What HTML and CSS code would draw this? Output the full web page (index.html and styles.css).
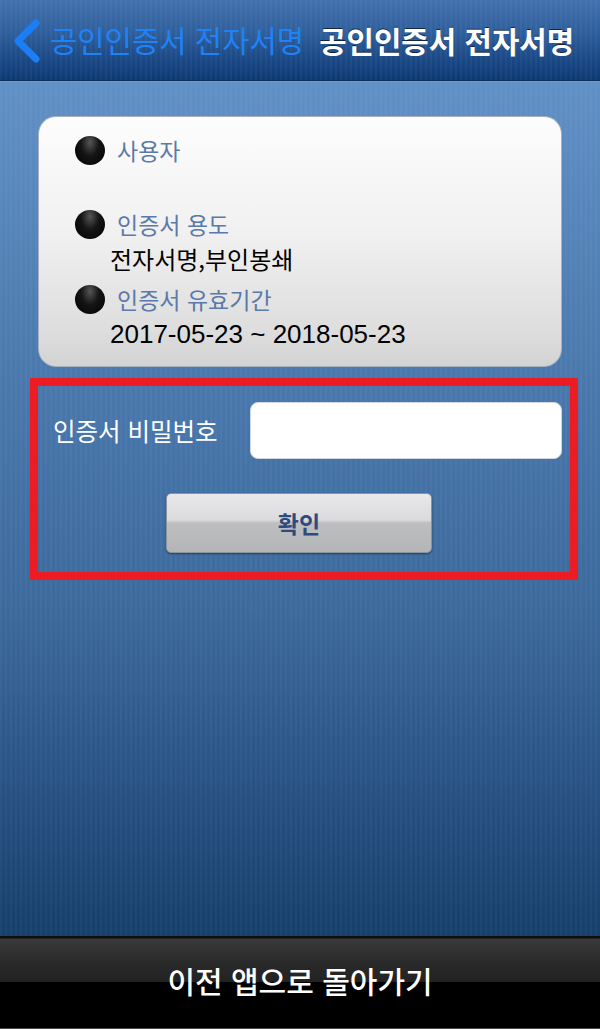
FILE: index.html
```html
<!DOCTYPE html>
<html lang="ko">
<head>
<meta charset="utf-8">
<title>공인인증서 전자서명</title>
<link rel="stylesheet" href="styles.css">
</head>
<body>
<div class="screen">
  <header class="nav">
    <svg class="chev" width="30" height="44" viewBox="0 0 30 44"><polyline points="24,4 6,22 24,40" fill="none" stroke="#1b7ef4" stroke-width="7" stroke-linecap="round" stroke-linejoin="round"/></svg>
    <span class="back-title">공인인증서 전자서명</span>
    <span class="title">공인인증서 전자서명</span>
  </header>
  <main class="content">
    <section class="card">
      <div class="row r1"><span class="dot"></span><span class="label">사용자</span></div>
      <div class="row r2"><span class="dot"></span><span class="label">인증서 용도</span></div>
      <div class="value ko">전자서명,부인봉쇄</div>
      <div class="row r3"><span class="dot"></span><span class="label">인증서 유효기간</span></div>
      <div class="value date">2017-05-23 ~ 2018-05-23</div>
    </section>
    <section class="pwbox">
      <div class="pwrow">
        <span class="pwlabel">인증서 비밀번호</span>
        <div class="pwinput"></div>
      </div>
      <button class="ok">확인</button>
    </section>
  </main>
  <footer class="bottom"><span>이전 앱으로 돌아가기</span></footer>
</div>
</body>
</html>
```

FILE: styles.css
```css
html, body { margin: 0; padding: 0; }
body {
  font-family: "Noto Sans CJK KR", "Noto Sans", sans-serif;
  width: 600px;
  height: 1029px;
  overflow: hidden;
}
.screen {
  display: flex;
  flex-direction: column;
  height: 1029px;
}
.nav {
  height: 80px;
  flex: none;
  display: flex;
  align-items: center;
  padding-left: 12px;
  background:
    repeating-linear-gradient(90deg, rgba(255,255,255,0.035) 0 2px, rgba(0,0,0,0) 2px 5px),
    linear-gradient(180deg, #4271ae 0%, #2f5f9c 40%, #1a4885 75%, #0e3a73 100%);
  border-bottom: 1px solid #0b2f5f;
  box-shadow: 0 1px 0 #7198c8;
}
.chev { flex: none; margin-top: 1px; }
.back-title {
  margin-left: 8px;
  color: #1f82f6;
  font-size: 29.7px;
  line-height: 40px;
}
.title {
  margin-left: 15px;
  color: #fff;
  font-size: 29.8px;
  font-weight: 700;
  line-height: 40px;
  text-shadow: 0 -1px 0 rgba(0,0,0,0.6);
}
.content {
  flex: 1;
  margin-top: 1px;
  padding-top: 34px;
  background:
    repeating-linear-gradient(90deg, rgba(255,255,255,0.03) 0 2px, rgba(0,0,0,0) 2px 5px),
    linear-gradient(180deg, #6090c5 0%, #4a78ad 35%, #3d6a9d 61%, #2a5586 80%, #173f6b 100%);
}
.card {
  margin: 0 38px;
  height: 251px;
  box-sizing: border-box;
  border: 1px solid #a9b3c0;
  border-radius: 18px;
  background: linear-gradient(180deg, #fdfdfd 0%, #f1f1f1 45%, #dedede 85%, #d3d3d3 100%);
  padding: 17px 0 0 36px;
}
.row {
  display: flex;
  align-items: center;
  height: 32px;
}
.r2 { margin-top: 42px; }
.r3 { margin-top: 5px; }
.dot {
  width: 30px;
  height: 29px;
  border-radius: 50%;
  background: radial-gradient(ellipse at 50% 22%, #555 0%, #151515 42%, #000 100%);
  flex: none;
}
.label {
  margin-left: 12px;
  color: #5b7aa9;
  font-size: 23px;
  line-height: 32px;
}
.value {
  margin-left: 35px;
  height: 38px;
  line-height: 38px;
  color: #000;
}
.value.ko { font-size: 24px; }
.value.date { font-family: "Liberation Sans", "Noto Sans CJK KR", sans-serif; font-size: 26px; }
.pwbox {
  margin: 11px 22px 0 30px;
  height: 202px;
  box-sizing: border-box;
  border: 8px solid #ec1c24;
  padding: 16px 8px 0 15px;
}
.pwrow {
  display: flex;
  align-items: center;
  justify-content: space-between;
}
.pwlabel {
  color: #fff;
  font-size: 24.5px;
  line-height: 30px;
}
.pwinput {
  width: 312px;
  height: 57px;
  box-sizing: border-box;
  background: #fff;
  border: 1px solid #cfd6de;
  border-radius: 8px;
}
.ok {
  display: block;
  margin: 34px 0 0 113px;
  width: 266px;
  height: 60px;
  border: 1px solid #8d939a;
  border-radius: 5px;
  background: linear-gradient(180deg, #e9e9eb 0%, #dadadc 45%, #bdbec0 50%, #b4b5b7 100%);
  box-shadow: 0 1px 2px rgba(0,0,0,0.45);
  color: #2f4a7e;
  font-family: "Noto Sans CJK KR", sans-serif;
  font-size: 23px;
  font-weight: 700;
  padding: 0;
}
.bottom {
  height: 93px;
  flex: none;
  display: flex;
  align-items: center;
  justify-content: center;
  background: linear-gradient(180deg, #0e0e0e 0px, #0e0e0e 2px, #3a3a3a 3px, #2b2b2b 25px, #222 46px, #000 46px, #000 92px, #4a4a4a 92px);
}
.bottom span {
  color: #fff;
  font-size: 30px;
  font-weight: 500;
  line-height: 40px;
  margin-top: -6px;
}
```
